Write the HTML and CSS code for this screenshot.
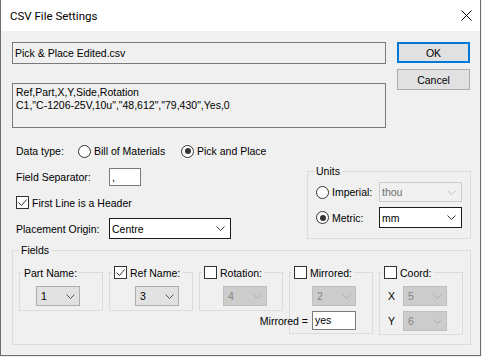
FILE: index.html
```html
<!DOCTYPE html>
<html lang="en">
<head>
  <meta charset="UTF-8" />
  <title>CSV File Settings</title>
  <link rel="stylesheet" href="styles.css">
</head>
<body>
  <div class="window">
    <div class="title-bar">
      <span class="title">CSV File Settings</span>
      <svg class="close" width="11" height="11" viewBox="0 0 11 11">
        <path d="M0.5 0.5 L10.5 10.5 M10.5 0.5 L0.5 10.5" stroke="#000" stroke-width="1" fill="none"/>
      </svg>
    </div>

    <div class="dialog">
      <div class="top">
        <div class="file-col">
          <div class="box file-name">Pick &amp; Place Edited.csv</div>
          <div class="box preview">Ref,Part,X,Y,Side,Rotation<br>C1,"C-1206-25V,10u","48,612","79,430",Yes,0</div>
        </div>
        <div class="btn-col">
          <button class="btn default">OK</button>
          <button class="btn">Cancel</button>
        </div>
      </div>

      <div class="data-type">
        <span class="lbl-type">Data type:</span>
        <span class="option first"><span class="radio"></span>Bill of Materials</span>
        <span class="option"><span class="radio on"></span>Pick and Place</span>
      </div>

      <div class="middle">
        <div class="opts">
          <div class="row">
            <span class="lbl">Field Separator:</span>
            <div class="text-box sep">,</div>
          </div>
          <div class="row check-row">
            <span class="check"><svg width="11" height="11" viewBox="0 0 11 11"><polyline points="1.5,5.5 4.5,8.5 9.5,2.5" fill="none" stroke="#333"/></svg></span>First Line is a Header
          </div>
          <div class="row origin-row">
            <span class="lbl">Placement Origin:</span>
            <div class="combo edit origin">
              <span>Centre</span>
              <svg width="9" height="5" viewBox="0 0 9 5"><polyline points="0.5,0.5 4.5,4.5 8.5,0.5" fill="none" stroke="#333"/></svg>
            </div>
          </div>
        </div>

        <fieldset class="group units">
          <legend>Units</legend>
          <div class="unit-row">
            <span class="option unit-opt"><span class="radio"></span>Imperial:</span>
            <div class="combo edit dim unit-combo thou">
              <span>thou</span>
              <svg width="9" height="5" viewBox="0 0 9 5"><polyline points="0.5,0.5 4.5,4.5 8.5,0.5" fill="none" stroke="#bfbfbf"/></svg>
            </div>
          </div>
          <div class="unit-row">
            <span class="option unit-opt"><span class="radio on"></span>Metric:</span>
            <div class="combo edit unit-combo">
              <span>mm</span>
              <svg width="9" height="5" viewBox="0 0 9 5"><polyline points="0.5,0.5 4.5,4.5 8.5,0.5" fill="none" stroke="#333"/></svg>
            </div>
          </div>
        </fieldset>
      </div>

      <fieldset class="group fields">
        <legend>Fields</legend>
        <div class="field-row">
          <fieldset class="sub">
            <legend>Part Name:</legend>
            <div class="combo list part-combo">
              <span>1</span>
              <svg width="9" height="5" viewBox="0 0 9 5"><polyline points="0.5,0.5 4.5,4.5 8.5,0.5" fill="none" stroke="#555"/></svg>
            </div>
          </fieldset>

          <fieldset class="sub">
            <legend><span class="check"><svg width="11" height="11" viewBox="0 0 11 11"><polyline points="1.5,5.5 4.5,8.5 9.5,2.5" fill="none" stroke="#333"/></svg></span>Ref Name:</legend>
            <div class="combo list ref-combo">
              <span>3</span>
              <svg width="9" height="5" viewBox="0 0 9 5"><polyline points="0.5,0.5 4.5,4.5 8.5,0.5" fill="none" stroke="#555"/></svg>
            </div>
          </fieldset>

          <fieldset class="sub">
            <legend><span class="check"></span>Rotation:</legend>
            <div class="combo list dim rot-combo">
              <span>4</span>
              <svg width="9" height="5" viewBox="0 0 9 5"><polyline points="0.5,0.5 4.5,4.5 8.5,0.5" fill="none" stroke="#adadad"/></svg>
            </div>
          </fieldset>

          <fieldset class="sub tall">
            <legend><span class="check"></span>Mirrored:</legend>
            <div class="combo list dim mir-combo">
              <span>2</span>
              <svg width="9" height="5" viewBox="0 0 9 5"><polyline points="0.5,0.5 4.5,4.5 8.5,0.5" fill="none" stroke="#adadad"/></svg>
            </div>
            <div class="mir-row">
              <span class="mir-lbl">Mirrored =</span>
              <div class="text-box yes">yes</div>
            </div>
          </fieldset>

          <fieldset class="sub tall">
            <legend><span class="check"></span>Coord:</legend>
            <div class="coord-row">
              <span class="axis">X</span>
              <div class="combo list dim">
                <span>5</span>
                <svg width="9" height="5" viewBox="0 0 9 5"><polyline points="0.5,0.5 4.5,4.5 8.5,0.5" fill="none" stroke="#adadad"/></svg>
              </div>
            </div>
            <div class="coord-row">
              <span class="axis">Y</span>
              <div class="combo list dim">
                <span>6</span>
                <svg width="9" height="5" viewBox="0 0 9 5"><polyline points="0.5,0.5 4.5,4.5 8.5,0.5" fill="none" stroke="#adadad"/></svg>
              </div>
            </div>
          </fieldset>
        </div>
      </fieldset>
    </div>
  </div>
</body>
</html>
```

FILE: styles.css
```css
body {
  margin: 0;
  padding: 0;
  background-color: #f0f0f0;
  font-family: 'Liberation Sans', Arial, sans-serif;
  font-size: 10.5px;
  color: #000;
}

.window {
  width: 481px;
  height: 356px;
  box-sizing: border-box;
  border: 1px solid #6d6d6d;
  border-top: none;
  background-color: #f0f0f0;
}

.title-bar {
  height: 31px;
  background-color: #fff;
  display: flex;
  align-items: center;
  justify-content: space-between;
  padding: 0 8px 0 9px;
}

.title {
  font-family: Roboto, 'Liberation Sans', sans-serif;
  font-size: 11.5px;
}

.dialog {
  padding: 11px 9px 0 11px;
}

/* top part: file name, preview and buttons */
.top {
  display: flex;
  gap: 11px;
  padding-right: 1px;
}

.file-col {
  width: 374px;
}

.box {
  box-sizing: border-box;
  border: 1px solid #7a7a7a;
  background-color: #f0f0f0;
}

.file-name {
  height: 22px;
  line-height: 20px;
  padding: 0 2px;
}

.preview {
  height: 45px;
  margin-top: 19px;
  padding: 2px 3px;
  line-height: 13px;
}

.btn-col {
  display: flex;
  flex-direction: column;
  gap: 6px;
  width: 73px;
}

.btn {
  height: 21px;
  box-sizing: border-box;
  border: 1px solid #adadad;
  background-color: #e1e1e1;
  font: inherit;
  color: #000;
  padding: 0;
}

.btn.default {
  border: 2px solid #0078d7;
}

/* radios and checks */
.option {
  display: inline-flex;
  align-items: center;
  gap: 3px;
}

.radio {
  width: 13px;
  height: 13px;
  box-sizing: border-box;
  border: 1px solid #333;
  border-radius: 50%;
  background-color: #fff;
  display: inline-flex;
  align-items: center;
  justify-content: center;
}

.radio.on::after {
  content: '';
  width: 6px;
  height: 6px;
  border-radius: 50%;
  background-color: #333;
}

.check {
  width: 13px;
  height: 13px;
  box-sizing: border-box;
  border: 1px solid #333;
  background-color: #fff;
  display: inline-block;
  flex: none;
}

.check svg {
  display: block;
}

.data-type {
  display: flex;
  align-items: center;
  height: 16px;
  margin-top: 15px;
  padding-left: 4px;
}

.lbl-type {
  width: 62px;
}

.option.first {
  width: 103px;
}

/* middle: separator, header flag, origin and units */
.middle {
  display: flex;
  margin-top: 6px;
}

.opts {
  flex: 1;
  padding: 3px 0 0 4px;
}

.row {
  display: flex;
  align-items: center;
}

.lbl {
  width: 93px;
}

.text-box {
  box-sizing: border-box;
  border: 1px solid #7a7a7a;
  background-color: #fff;
  padding-left: 2px;
}

.sep {
  width: 32px;
  height: 18px;
  line-height: 16px;
}

.check-row {
  margin-top: 10px;
  height: 13px;
  gap: 3px;
}

.origin-row {
  margin-top: 9px;
}

.combo {
  box-sizing: border-box;
  height: 21px;
  display: flex;
  align-items: center;
  justify-content: space-between;
  padding: 0 5px 0 2px;
}

.combo.edit {
  background-color: #fff;
  border: 1px solid #1b1b1b;
}

.combo.edit.dim {
  background-color: #f0f0f0;
  border-color: #cccccc;
  color: #6d6d6d;
}

.combo.list {
  width: 44px;
  height: 20px;
  background-color: #e1e1e1;
  border: 1px solid #adadad;
  padding: 0 4px 0 4px;
}

.combo.list.dim {
  background-color: #cccccc;
  border-color: #bfbfbf;
  color: #838383;
}

.origin {
  width: 122px;
}

.group {
  margin: 0;
  border: 1px solid #dcdcdc;
}

.group > legend {
  padding: 0 2px;
  line-height: 12px;
}

.units {
  width: 164px;
  box-sizing: border-box;
  margin-left: auto;
  padding: 5px 8px 10px 6px;
}

.unit-row {
  display: flex;
  align-items: center;
  padding-left: 2px;
}

.unit-row + .unit-row {
  margin-top: 5px;
}

.unit-opt {
  width: 63px;
}

.unit-combo {
  width: 83px;
}

.thou {
  height: 20px;
}

/* fields */
.fields {
  margin-top: 5px;
  padding: 10px 0 9px 6px;
}

.field-row {
  display: flex;
  align-items: flex-start;
  gap: 6px;
}

.sub {
  width: 84px;
  box-sizing: border-box;
  margin: 0;
  border: 1px solid #dcdcdc;
  padding: 7px 0 4px 2px;
}

.sub.tall {
  padding-bottom: 3px;
}

.sub legend {
  display: flex;
  align-items: center;
  gap: 3px;
  height: 13px;
  padding: 0 2px;
}

.part-combo {
  margin-left: 14px;
}

.ref-combo {
  margin-left: 23px;
}

.rot-combo {
  margin-left: 21px;
}

.mir-combo {
  margin-left: 20px;
}

.mir-row {
  display: flex;
  align-items: center;
  margin-top: 5px;
}

.mir-lbl {
  width: 50px;
  margin-left: -34px;
  margin-right: 4px;
  text-align: right;
  white-space: nowrap;
}

.yes {
  width: 44px;
  height: 19px;
  line-height: 17px;
}

.coord-row {
  display: flex;
  align-items: center;
  padding-left: 6px;
}

.coord-row + .coord-row {
  margin-top: 5px;
}

.axis {
  width: 15px;
}
```
